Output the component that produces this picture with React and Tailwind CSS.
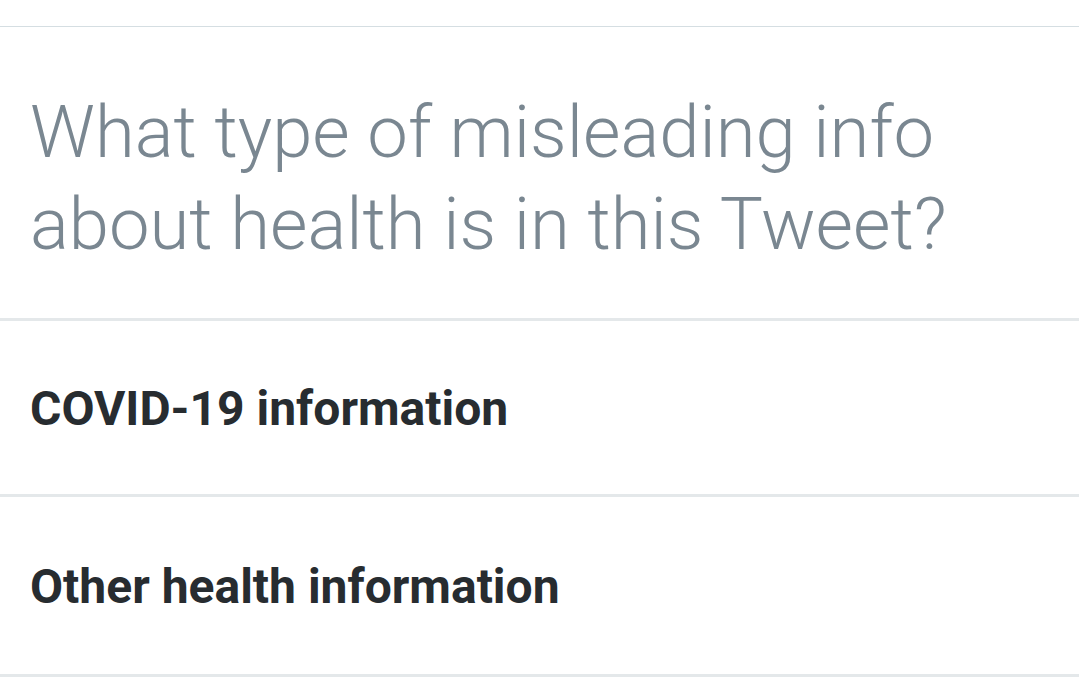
export default function App() {
  return (
    <div className="w-[1079px] h-[698px] bg-white overflow-hidden" style={{ fontFamily: 'Roboto, sans-serif' }}>
      <div className="h-[26px]" />
      <div className="h-px bg-[#d5dee2]" />
      <div className="h-[294px] pl-[30px] pt-[60px] border-b-[3px] border-[#e4e8ea]">
        <h1 className="text-[72.4px] leading-[92px] font-light text-[#7a8791]">
          What type of misleading info<br />about health is in this Tweet?
        </h1>
      </div>
      <div className="h-[176px] pl-[30px] pt-[2px] flex items-center border-b-[3px] border-[#e4e8ea]">
        <span className="text-[48px] font-bold text-[#272c30]">COVID-19 information</span>
      </div>
      <div className="h-[180px] pl-[30px] pt-[2px] flex items-center border-b-[3px] border-[#e4e8ea]">
        <span className="text-[48px] font-bold text-[#272c30]">Other health information</span>
      </div>
    </div>
  );
}
